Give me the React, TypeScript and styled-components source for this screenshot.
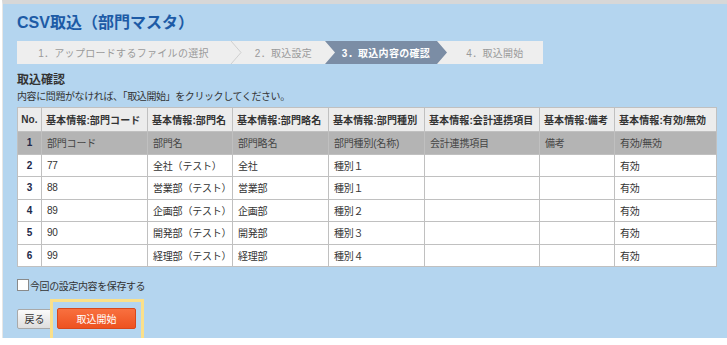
import React from 'react'
import styled, { createGlobalStyle } from 'styled-components'

const GlobalStyle = createGlobalStyle`
  html, body {
    margin: 0;
    padding: 0;
    background: #ffffff;
  }
  body {
    font-family: "Liberation Sans", "Noto Sans CJK JP", sans-serif;
    font-size: 10px;
    color: #333;
  }
`

const Frame = styled.div`
  margin-left: 2px;
  width: 719px;
  height: 334px;
  background: #b4d5ef;
  border-top: 4px solid #d7d7d7;
  border-left: 1px solid #e6e6e6;
  border-right: 3px solid #cfcfcf;
  padding: 0 0 0 14px;
  box-sizing: content-box;
  position: relative;
`

const Inner = styled.div`
  width: 699px;
  display: flex;
  flex-direction: column;
`

const Title = styled.h1`
  margin: 0;
  padding-top: 7px;
  height: 30px;
  font-size: 16px;
  font-weight: bold;
  color: #1d5ba6;
  line-height: 24px;
`

const StepBar = styled.div`
  display: flex;
  width: 526px;
  height: 23px;
  background: #eeeeee;
`

const Step = styled.div<{ $w: number; $active?: boolean }>`
  width: ${(p) => p.$w}px;
  display: flex;
  align-items: center;
  justify-content: center;
  font-size: 10px;
  letter-spacing: 0.3px;
  color: ${(p) => (p.$active ? '#ffffff' : '#9a9a9a')};
  font-weight: ${(p) => (p.$active ? 'bold' : 'normal')};
  background: ${(p) => (p.$active ? '#7b8da5' : 'transparent')};
  clip-path: ${(p) =>
    p.$active
      ? 'polygon(0 0, calc(100% - 10px) 0, 100% 50%, calc(100% - 10px) 100%, 0 100%, 10px 50%)'
      : 'none'};
`

const Chevron = styled.svg`
  width: 12px;
  height: 23px;
  flex: none;
`

const SectionTitle = styled.div`
  margin-top: 9px;
  font-size: 12px;
  font-weight: bold;
  color: #333;
  line-height: 15px;
`

const Lead = styled.div`
  font-size: 10px;
  letter-spacing: -0.4px;
  color: #333;
  line-height: 14px;
  margin-top: 2px;
`

const Grid = styled.table`
  margin-top: 3px;
  width: 699px;
  border-collapse: collapse;
  table-layout: fixed;
  background: #ffffff;
  border: 1px solid #aaaaaa;
`

const HeadCell = styled.th<{ $center?: boolean }>`
  height: 23px;
  padding: ${(p) => (p.$center ? '0' : '0 0 0 4px')};
  text-align: ${(p) => (p.$center ? 'center' : 'left')};
  font-size: 10px;
  letter-spacing: 0.1px;
  font-weight: bold;
  color: #333;
  background: #ececec;
  border: 1px solid #c0c0c0;
  white-space: nowrap;
  overflow: hidden;
`

const Row = styled.tr<{ $gray?: boolean }>`
  background: ${(p) => (p.$gray ? '#b4b4b4' : '#ffffff')};
  color: ${(p) => (p.$gray ? '#444' : '#333')};
`

const Cell = styled.td`
  height: 21.5px;
  padding: 0 0 0 5px;
  font-size: 10px;
  letter-spacing: -0.2px;
  border: 1px solid #c0c0c0;
  white-space: nowrap;
  overflow: hidden;
`

const NumCell = styled(Cell)`
  padding: 0;
  text-align: center;
  font-weight: bold;
  color: #22294a;
`

const SaveRow = styled.label`
  display: flex;
  align-items: center;
  margin-top: 11px;
  font-size: 10px;
  letter-spacing: -0.4px;
  color: #333;
  height: 14px;
`

const Box = styled.span`
  width: 10px;
  height: 10px;
  border: 1px solid #8a8a8a;
  background: #ffffff;
  margin-right: 1px;
  box-sizing: content-box;
`

const Actions = styled.div`
  display: flex;
  align-items: center;
  gap: 5px;
  margin-top: 16px;
  position: relative;
`

const BackButton = styled.button`
  width: 35px;
  height: 20px;
  padding: 0;
  border: 1px solid #a9a9a9;
  border-radius: 2px;
  background: linear-gradient(#fafafa, #dedede);
  font-family: "Liberation Sans", "Noto Sans CJK JP", sans-serif;
  font-size: 10px;
  color: #333;
`

const StartButton = styled.button`
  width: 79px;
  height: 21px;
  padding: 0;
  border: 1px solid #d8471b;
  border-radius: 2px;
  background: linear-gradient(#f8703f, #ee5220);
  font-family: "Liberation Sans", "Noto Sans CJK JP", sans-serif;
  font-size: 10px;
  color: #ffffff;
`

const Highlight = styled.div`
  position: absolute;
  left: 33px;
  top: -9px;
  width: 88px;
  height: 38px;
  border: 3px solid #fbe08a;
  pointer-events: none;
`

const headers = [
  'No.',
  '基本情報:部門コード',
  '基本情報:部門名',
  '基本情報:部門略名',
  '基本情報:部門種別',
  '基本情報:会計連携項目',
  '基本情報:備考',
  '基本情報:有効/無効',
]

const widths = [24, 106, 85, 96, 96, 115, 75, 102]

const rows = [
  ['1', '部門コード', '部門名', '部門略名', '部門種別(名称)', '会計連携項目', '備考', '有効/無効'],
  ['2', '77', '全社（テスト）', '全社', '種別１', '', '', '有効'],
  ['3', '88', '営業部（テスト）', '営業部', '種別１', '', '', '有効'],
  ['4', '89', '企画部（テスト）', '企画部', '種別２', '', '', '有効'],
  ['5', '90', '開発部（テスト）', '開発部', '種別３', '', '', '有効'],
  ['6', '99', '経理部（テスト）', '経理部', '種別４', '', '', '有効'],
]

const Separator = () => (
  <Chevron viewBox="0 0 12 23">
    <polyline points="1,0 11,11.5 1,23" fill="none" stroke="#cfcfcf" strokeWidth="1" />
  </Chevron>
)

const App = () => (
  <>
    <GlobalStyle />
    <Frame>
      <Inner>
        <Title>CSV取込（部門マスタ）</Title>
        <StepBar>
          <Step $w={213}>1．アップロードするファイルの選択</Step>
          <Separator />
          <Step $w={83}>2．取込設定</Step>
          <Step $w={122} $active>
            3．取込内容の確認
          </Step>
          <Step $w={96}>4．取込開始</Step>
        </StepBar>
        <SectionTitle>取込確認</SectionTitle>
        <Lead>内容に問題がなければ、「取込開始」をクリックしてください。</Lead>
        <Grid>
          <colgroup>
            {widths.map((w, i) => (
              <col key={i} style={{ width: w }} />
            ))}
          </colgroup>
          <thead>
            <tr>
              {headers.map((h, i) => (
                <HeadCell key={i} $center={i === 0}>
                  {h}
                </HeadCell>
              ))}
            </tr>
          </thead>
          <tbody>
            {rows.map((r, i) => (
              <Row key={i} $gray={i === 0}>
                <NumCell>{r[0]}</NumCell>
                {r.slice(1).map((c, j) => (
                  <Cell key={j}>{c}</Cell>
                ))}
              </Row>
            ))}
          </tbody>
        </Grid>
        <SaveRow>
          <Box />
          今回の設定内容を保存する
        </SaveRow>
        <Actions>
          <BackButton>戻る</BackButton>
          <StartButton>取込開始</StartButton>
          <Highlight />
        </Actions>
      </Inner>
    </Frame>
  </>
)

export default App
